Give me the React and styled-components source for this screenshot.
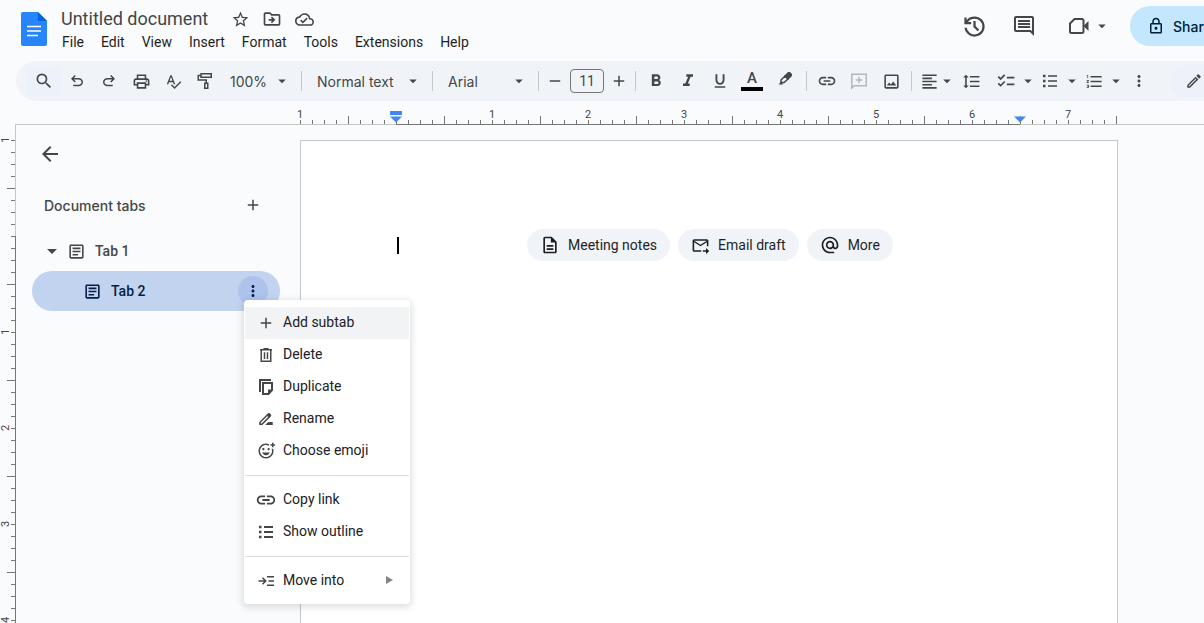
import React, { useState } from "react";
import styled, { createGlobalStyle } from "styled-components";
import {
  MdAdd,
  MdAlternateEmail,
  MdArrowBack,
  MdArrowDropDown,
  MdChecklist,
  MdDriveFileRenameOutline,
  MdFormatAlignLeft,
  MdFormatBold,
  MdFormatItalic,
  MdFormatLineSpacing,
  MdFormatListNumbered,
  MdFormatUnderlined,
  MdLink,
  MdMoreVert,
  MdOutlineAddReaction,
  MdOutlineArticle,
  MdOutlineCloudDone,
  MdOutlineComment,
  MdOutlineDescription,
  MdOutlineDriveFileMove,
  MdOutlineEdit,
  MdOutlineForwardToInbox,
  MdOutlineImage,
  MdOutlineLock,
  MdOutlinePrint,
  MdRemove,
  MdSearch,
  MdSpellcheck,
  MdStarBorder,
} from "react-icons/md";

const Symbol = ({ size, d }) => (
  <svg width={size} height={size} viewBox="0 -960 960 960" fill="currentColor">
    <path d={d} />
  </svg>
);

const UndoIcon = () => (
  <Symbol
    size={18}
    d="M280-200v-80h284q63 0 109.5-40T720-420q0-60-46.5-100T564-560H312l104 104-56 56-200-200 200-200 56 56-104 104h252q97 0 166.5 63T800-420q0 94-69.5 157T564-200H280Z"
  />
);

const RedoIcon = () => (
  <Symbol
    size={18}
    d="M396-200q-97 0-166.5-63T160-420q0-94 69.5-157T396-640h252L544-744l56-56 200 200-200 200-56-56 104-104H396q-63 0-109.5 40T240-420q0 60 46.5 100T396-280h284v80H396Z"
  />
);

const HistoryIcon = () => (
  <Symbol
    size={27}
    d="M480-120q-138 0-240.5-91.5T122-440h82q14 104 92.5 172T480-200q117 0 198.5-81.5T760-480q0-117-81.5-198.5T480-760q-69 0-129 32t-101 88h110v80H120v-240h80v94q51-64 124.5-99T480-840q75 0 140.5 28.5t114 77q48.5 48.5 77 114T840-480q0 75-28.5 140.5t-77 114q-48.5 48.5-114 77T480-120Zm112-192L440-464v-216h80v184l128 128-56 56Z"
  />
);

const DocsLogo = () => (
  <svg width="26" height="34" viewBox="0 0 26 34">
    <path d="M2 0h15l9 9v23a2 2 0 0 1-2 2H2a2 2 0 0 1-2-2V2a2 2 0 0 1 2-2z" fill="#2684fc" />
    <path d="M17 0l9 9h-9z" fill="#0066da" />
    <path d="M6 14.5h14M6 19h14M6 23.5h11" stroke="#fff" strokeWidth="1.7" />
  </svg>
);

const PaintIcon = () => (
  <svg width="18" height="18" viewBox="0 0 18 18" fill="none" stroke="currentColor" strokeWidth="1.5">
    <path d="M5 1.75h10.25v3.5H5zM5 3.5H2.25V8h8v3M8.75 11.25h3v5h-3z" />
  </svg>
);

const HighlightIcon = () => (
  <svg width="18" height="18" viewBox="0 0 18 18" fill="none" stroke="currentColor" strokeWidth="1.5">
    <path d="M9 6L5 10v2.500h3L12 9z" />
    <path d="M8 6l4-4h2l2 2v2l-4 4z" fill="currentColor" stroke="none" />
    <path d="M2.500 14.500l3-3 1.500 3z" fill="currentColor" stroke="none" />
  </svg>
);

const AddCommentIcon = () => (
  <svg width="18" height="18" viewBox="0 0 18 18" fill="none" stroke="currentColor" strokeWidth="1.5">
    <path d="M1.75 16V2.25h14.5v11.5H4z" />
    <path d="M9 4.75v6.5M5.75 8h6.5" />
  </svg>
);

const MeetIcon = () => (
  <svg width="22" height="18" viewBox="0 0 22 18">
    <path d="M6.500 2H14a1.500 1.500 0 0 1 1.500 1.500v11A1.500 1.500 0 0 1 14 16H3.500A1.500 1.500 0 0 1 2 14.500v-8z" fill="none" stroke="currentColor" strokeWidth="2" strokeLinejoin="round" />
    <path d="M15.500 9l5-5v10z" fill="currentColor" />
  </svg>
);

const ListIcon = ({ weight }) => (
  <svg width="18" height="18" viewBox="0 0 18 18" fill="none" stroke="currentColor" strokeWidth={weight}>
    <path d="M7 4h9M7 9h9M7 14h9" />
    <path d="M2 4h2.500M2 9h2.500M2 14h2.500" strokeWidth="2.5" />
  </svg>
);

const TrashIcon = () => (
  <svg width="18" height="18" viewBox="0 0 18 18" fill="none" stroke="currentColor" strokeWidth="1.5">
    <path d="M3 3.75h12M6.5 2.75h5M4.25 4v11.25h9.5V4M7.5 6.25V13M10.5 6.25V13" />
  </svg>
);

const DuplicateIcon = () => (
  <svg width="18" height="18" viewBox="0 0 18 18" fill="none" stroke="currentColor" strokeWidth="2">
    <path d="M3 14V2h11M6 5h9v7l-3.500 4H6z" />
    <path d="M15 11.500v1l-3 3h-1v-4z" fill="currentColor" stroke="none" />
  </svg>
);

const MoveIcon = () => (
  <svg width="18" height="18" viewBox="0 0 18 18" fill="none" stroke="currentColor" strokeWidth="1.5">
    <path d="M1.500 9h7M5.500 5.750L8.750 9 5.500 12.250M10 4.750h7M11.500 9H17M10 13.250h7" />
  </svg>
);

const menus = ["File", "Edit", "View", "Insert", "Format", "Tools", "Extensions", "Help"];

const tabActions = [
  [
    { label: "Add subtab", icon: <MdAdd size={18} />, active: true },
    { label: "Delete", icon: <TrashIcon /> },
    { label: "Duplicate", icon: <DuplicateIcon /> },
    { label: "Rename", icon: <MdDriveFileRenameOutline size={18} /> },
    { label: "Choose emoji", icon: <MdOutlineAddReaction size={18} /> },
  ],
  [
    { label: "Copy link", icon: <MdLink size={22} /> },
    { label: "Show outline", icon: <ListIcon weight={2} /> },
  ],
  [{ label: "Move into", icon: <MoveIcon />, submenu: true }],
];

// half inch steps, a number on every second one
const halves = (count, labels, from, to) =>
  Array.from({ length: count }, (_, i) => ({
    label: i % 2 === 0 ? labels[i / 2] : "",
    half: i % 2 === 1,
    active: i >= from && i < to,
  }));

const across = halves(17, ["1", "", "1", "2", "3", "4", "5", "6", "7"], 2, 15);
const down = halves(11, ["1", "", "1", "2", "3", "4"], 2, 11);

const App = () => {
  const [title, setTitle] = useState("Untitled document");
  const [fontSize, setFontSize] = useState("11");

  return (
    <Container>
      <GlobalStyle />
      <Header>
        <Logo href="#" aria-label="Docs home">
          <DocsLogo />
        </Logo>
        <Heading>
          <TitleRow>
            <TitleInput aria-label="Document title" value={title} onChange={(e) => setTitle(e.target.value)} />
            <TitleButton aria-label="Star"><MdStarBorder size={19} /></TitleButton>
            <TitleButton aria-label="Move"><MdOutlineDriveFileMove size={20} /></TitleButton>
            <TitleButton aria-label="Document status"><MdOutlineCloudDone size={19} /></TitleButton>
          </TitleRow>
          <MenuBar>
            {menus.map((m) => (
              <MenuButton key={m}>{m}</MenuButton>
            ))}
          </MenuBar>
        </Heading>
        <Actions>
          <ActionButton aria-label="Version history"><HistoryIcon /></ActionButton>
          <ActionButton aria-label="Comments"><MdOutlineComment size={24} /></ActionButton>
          <MeetButton aria-label="Join a call">
            <MeetIcon />
            <MdArrowDropDown size={18} />
          </MeetButton>
          <ShareButton>
            <MdOutlineLock size={18} />
            Share
          </ShareButton>
        </Actions>
      </Header>

      <Toolbar>
        <SearchButton aria-label="Search the menus"><MdSearch size={20} /></SearchButton>
        <ToolButton aria-label="Undo"><UndoIcon /></ToolButton>
        <ToolButton aria-label="Redo"><RedoIcon /></ToolButton>
        <ToolButton aria-label="Print"><MdOutlinePrint size={19} /></ToolButton>
        <ToolButton aria-label="Spelling"><MdSpellcheck size={17} /></ToolButton>
        <ToolButton aria-label="Paint format"><PaintIcon /></ToolButton>
        <Picker $width="76px" $inset="9px">
          <Select aria-label="Zoom"><option>100%</option></Select>
          <MdArrowDropDown size={18} />
        </Picker>
        <Separator />
        <Picker $width="122px" $inset="11px">
          <Select aria-label="Styles"><option>Normal text</option></Select>
          <MdArrowDropDown size={18} />
        </Picker>
        <Separator />
        <Picker $width="97px" $inset="11px">
          <Select aria-label="Font"><option>Arial</option></Select>
          <MdArrowDropDown size={18} />
        </Picker>
        <Separator />
        <ToolButton $width="24px" aria-label="Decrease font size"><MdRemove size={18} /></ToolButton>
        <SizeInput aria-label="Font size" value={fontSize} onChange={(e) => setFontSize(e.target.value)} />
        <ToolButton $width="24px" aria-label="Increase font size"><MdAdd size={18} /></ToolButton>
        <Separator />
        <ToolButton aria-label="Bold"><MdFormatBold size={20} /></ToolButton>
        <ToolButton aria-label="Italic"><MdFormatItalic size={20} /></ToolButton>
        <ToolButton aria-label="Underline"><MdFormatUnderlined size={18} /></ToolButton>
        <ToolButton aria-label="Text color"><ColorMark>A</ColorMark></ToolButton>
        <ToolButton $width="34px" aria-label="Highlight color"><Raised><HighlightIcon /></Raised></ToolButton>
        <Separator />
        <ToolButton aria-label="Insert link"><MdLink size={20} /></ToolButton>
        <ToolButton aria-label="Add comment" disabled><AddCommentIcon /></ToolButton>
        <ToolButton aria-label="Insert image"><MdOutlineImage size={19} /></ToolButton>
        <Separator />
        <ToolButton $width="26px" aria-label="Align"><MdFormatAlignLeft size={19} /></ToolButton>
        <DropButton $width="10px" aria-label="Align options"><MdArrowDropDown size={18} /></DropButton>
        <ToolButton $width="38px" aria-label="Line spacing"><MdFormatLineSpacing size={19} /></ToolButton>
        <ToolButton aria-label="Checklist"><MdChecklist size={20} /></ToolButton>
        <DropButton aria-label="Checklist options"><MdArrowDropDown size={18} /></DropButton>
        <ToolButton aria-label="Bulleted list"><ListIcon weight={1.5} /></ToolButton>
        <DropButton aria-label="Bulleted list options"><MdArrowDropDown size={18} /></DropButton>
        <ToolButton aria-label="Numbered list"><MdFormatListNumbered size={19} /></ToolButton>
        <DropButton aria-label="Numbered list options"><MdArrowDropDown size={18} /></DropButton>
        <ToolButton $width="34px" aria-label="More"><MdMoreVert size={18} /></ToolButton>
        <ModeButton aria-label="Editing mode">
          <MdOutlineEdit size={18} />
          <MdArrowDropDown size={18} />
        </ModeButton>
      </Toolbar>

      <Ruler>
        <RulerStart />
        <RulerTrack>
          {across.map((s, i) => (
            <HalfAcross key={i} $half={s.half} $active={s.active}>{s.label}</HalfAcross>
          ))}
          <LeftIndent viewBox="0 0 12 12">
            <path d="M0 0h12v4H0zM0 5.500h12l-6 6z" />
          </LeftIndent>
          <RightIndent viewBox="0 0 12 12">
            <path d="M0 5.500h12l-6 6z" />
          </RightIndent>
        </RulerTrack>
        <RulerEnd />
      </Ruler>

      <Main>
        <SideRuler>
          <SideRulerStart />
          {down.map((s, i) => (
            <HalfDown key={i} $half={s.half} $active={s.active}>
              {s.label && <SideLabel>{s.label}</SideLabel>}
            </HalfDown>
          ))}
        </SideRuler>

        <Sidebar>
          <BackButton aria-label="Close tabs"><MdArrowBack size={24} /></BackButton>
          <TabsHeader>
            <TabsTitle>Document tabs</TabsTitle>
            <RoundButton aria-label="Add tab"><MdAdd size={18} /></RoundButton>
          </TabsHeader>
          <TabRow>
            <MdArrowDropDown size={24} />
            <MdOutlineArticle size={19} />
            <TabName>Tab 1</TabName>
          </TabRow>
          <TabRow $selected>
            <MdOutlineArticle size={19} />
            <TabName>Tab 2</TabName>
            <RoundButton $pressed aria-label="Tab options"><MdMoreVert size={18} /></RoundButton>
            <Popup role="menu">
              {tabActions.map((group, i) => (
                <Group key={i}>
                  {group.map((a) => (
                    <PopupItem key={a.label} role="menuitem" $active={a.active}>
                      <PopupIcon>{a.icon}</PopupIcon>
                      {a.label}
                      {a.submenu && (
                        <SubmenuArrow viewBox="0 0 7 8">
                          <path d="M0 0l7 4-7 4z" />
                        </SubmenuArrow>
                      )}
                    </PopupItem>
                  ))}
                </Group>
              ))}
            </Popup>
          </TabRow>
        </Sidebar>

        <Page>
          <FirstLine>
            <Caret />
            <Chips>
              <Chip><MdOutlineDescription size={20} />Meeting notes</Chip>
              <Chip><MdOutlineForwardToInbox size={19} />Email draft</Chip>
              <Chip><MdAlternateEmail size={20} />More</Chip>
            </Chips>
          </FirstLine>
        </Page>
      </Main>
    </Container>
  );
};

export default App;

const GlobalStyle = createGlobalStyle`
  * {
    box-sizing: border-box;
  }
  body {
    margin: 0;
    background-color: #f9fbfd;
    color: #444746;
    font-family: Roboto, "Liberation Sans", sans-serif;
    font-size: 14px;
  }
  button, input, select {
    border: none;
    background: none;
    padding: 0;
    margin: 0;
    color: inherit;
    font: inherit;
  }
  button {
    cursor: pointer;
  }
  svg {
    display: block;
    flex: none;
  }
`;

const Container = styled.div`
  height: 100vh;
  overflow: hidden;
  display: flex;
  flex-direction: column;
`;

const Header = styled.header`
  flex: none;
  display: flex;
  height: 61px;
  padding-left: 21px;
`;
const Logo = styled.a`
  padding-top: 12px;
  margin-right: 14px;
`;
const Heading = styled.div`
  flex: 1;
  padding-top: 8px;
`;
const TitleRow = styled.div`
  display: flex;
  align-items: center;
  height: 22px;
`;
const TitleInput = styled.input`
  width: 163px;
  font-size: 18px;
  line-height: 22px;
`;
const TitleButton = styled.button`
  width: 32px;
  height: 22px;
  display: flex;
  align-items: center;
  justify-content: center;
`;
const MenuBar = styled.nav`
  display: flex;
  gap: 17px;
  padding: 3px 0 0 1px;
`;
const MenuButton = styled.button`
  color: #1f1f1f;
  line-height: 18px;
`;
const Actions = styled.div`
  flex: 0 0 254px;
  min-width: 0;
  display: flex;
  align-items: center;
  height: 40px;
  margin-top: 6px;
`;
const ActionButton = styled.button`
  flex: none;
  width: 49px;
  height: 40px;
  display: flex;
  align-items: center;
  justify-content: center;
`;
const MeetButton = styled(ActionButton)`
  width: 82px;
  gap: 3px;
`;
const ShareButton = styled.button`
  flex: none;
  display: flex;
  align-items: center;
  gap: 8px;
  height: 40px;
  padding: 0 24px 0 17px;
  border-radius: 20px;
  background-color: #c2e7ff;
  color: #001d35;
  font-family: Inter, Roboto, sans-serif;
  font-weight: 500;
`;

const Toolbar = styled.div`
  flex: none;
  display: flex;
  align-items: center;
  height: 40px;
  margin-left: 16px;
  padding-left: 10px;
  border-radius: 20px 0 0 20px;
  background-color: #f0f4f9;
  overflow: hidden;
`;
const ToolButton = styled.button`
  flex: none;
  width: ${(props) => props.$width || "32px"};
  height: 28px;
  display: flex;
  align-items: center;
  justify-content: center;
  &:disabled {
    color: #b4b7b9;
  }
`;
const SearchButton = styled(ToolButton)`
  width: 35px;
  background-color: #edf2fa;
`;
const DropButton = styled(ToolButton)`
  width: ${(props) => props.$width || "12px"};
`;
const Picker = styled.div`
  flex: none;
  display: flex;
  align-items: center;
  width: ${(props) => props.$width};
  height: 28px;
  padding: 0 6px 0 ${(props) => props.$inset};
  font-family: Inter, Roboto, sans-serif;
`;
const Select = styled.select`
  flex: 1;
  min-width: 0;
  appearance: none;
`;
const Separator = styled.div`
  flex: none;
  width: 1px;
  height: 20px;
  margin: 0 4px;
  background-color: #c7c7c7;
`;
const SizeInput = styled.input`
  flex: none;
  width: 34px;
  height: 24px;
  margin: 0 3px;
  border: 1px solid #747775;
  border-radius: 4px;
  text-align: center;
`;
const ColorMark = styled.span`
  width: 22px;
  height: 20px;
  border-bottom: 4px solid #000;
  font-size: 15px;
  font-weight: 500;
  line-height: 14px;
`;
const Raised = styled.span`
  padding-bottom: 4px;
`;
const ModeButton = styled.button`
  flex: none;
  display: flex;
  align-items: center;
  gap: 8px;
  height: 32px;
  margin-left: 14px;
  padding: 0 12px 0 15px;
  border-radius: 16px;
  background-color: #edf2fa;
`;

const RULE = "#747775";
const FAINT = "#c4c7c5";

const Ruler = styled.div`
  flex: none;
  display: flex;
  height: 24px;
  padding-left: 15px;
`;
const RulerStart = styled.div`
  flex: none;
  width: 285px;
  border-bottom: 1px solid ${FAINT};
`;
const RulerTrack = styled.div`
  position: relative;
  flex: none;
  display: flex;
`;
const HalfAcross = styled.div`
  width: 48px;
  border-bottom: 1px solid ${(props) => (props.$active ? RULE : FAINT)};
  background:
    repeating-linear-gradient(to right, ${RULE} 0 1px, transparent 1px 12px) left bottom / 48px 4px no-repeat,
    linear-gradient(${RULE}, ${RULE}) left bottom / 1px ${(props) => (props.$half ? "8px" : "4px")} no-repeat;
  font-size: 11px;
  line-height: 28px;
  text-indent: -3px;
`;
const RulerEnd = styled.div`
  flex: 1;
  border-bottom: 1px solid ${FAINT};
  background: linear-gradient(${RULE}, ${RULE}) left bottom / 1px 8px no-repeat;
`;
const LeftIndent = styled.svg`
  position: absolute;
  left: 90px;
  top: 10px;
  width: 12px;
  height: 12px;
  fill: #4285f4;
`;
const RightIndent = styled(LeftIndent)`
  left: 714px;
`;

const Main = styled.main`
  flex: 1;
  min-height: 0;
  display: flex;
`;
const SideRuler = styled.div`
  flex: none;
  width: 16px;
`;
const SideRulerStart = styled.div`
  height: 15px;
  border-right: 1px solid ${FAINT};
`;
const HalfDown = styled.div`
  display: flex;
  align-items: flex-start;
  height: 48px;
  border-right: 1px solid ${(props) => (props.$active ? RULE : FAINT)};
  background:
    repeating-linear-gradient(to bottom, ${RULE} 0 1px, transparent 1px 12px) right top / 4px 48px no-repeat,
    linear-gradient(${RULE}, ${RULE}) right top / ${(props) => (props.$half ? "8px" : "4px")} 1px no-repeat;
`;
const SideLabel = styled.div`
  width: 11px;
  height: 12px;
  margin-top: -6px;
  font-size: 11px;
  line-height: 12px;
  text-align: center;
  transform: rotate(-90deg);
`;

const Sidebar = styled.aside`
  flex: none;
  width: 284px;
  padding: 13px 20px 0 16px;
`;
const BackButton = styled.button`
  display: flex;
  align-items: center;
  justify-content: center;
  width: 36px;
  height: 32px;
`;
const TabsHeader = styled.div`
  display: flex;
  align-items: center;
  justify-content: space-between;
  height: 32px;
  margin: 19px 0 10px;
  padding: 0 12px;
`;
const TabsTitle = styled.h2`
  margin: 0;
  font-family: Inter, Roboto, sans-serif;
  font-size: 14px;
  font-weight: 500;
`;
const RoundButton = styled.button`
  display: flex;
  align-items: center;
  justify-content: center;
  width: 30px;
  height: 30px;
  border-radius: 50%;
  background-color: ${(props) => (props.$pressed ? "#adc3ec" : "transparent")};
`;
const TabRow = styled.div`
  position: relative;
  display: flex;
  align-items: center;
  height: 40px;
  padding: ${(props) => (props.$selected ? "0 12px 0 51px" : "0 12px 0 8px")};
  gap: ${(props) => (props.$selected ? "9px" : "3px")};
  border-radius: 20px;
  background-color: ${(props) => (props.$selected ? "#c2d3f0" : "transparent")};
  color: ${(props) => (props.$selected ? "#041e49" : "#444746")};
`;
const TabName = styled.span`
  flex: 1;
  padding-left: 6px;
  font-weight: 500;
  ${TabRow} + ${TabRow} & {
    padding-left: 0;
  }
`;

const Popup = styled.div`
  position: absolute;
  z-index: 1;
  left: 212px;
  top: 29px;
  width: 166px;
  padding: 7px 1px;
  border-radius: 4px;
  background-color: #fff;
  box-shadow: 0 2px 6px 2px rgba(60, 64, 67, 0.15);
`;
const Group = styled.div`
  & + & {
    margin-top: 8px;
    padding-top: 8px;
    border-top: 1px solid #dadce0;
  }
`;
const PopupItem = styled.button`
  display: flex;
  align-items: center;
  width: 100%;
  height: 32px;
  padding: 0 16px 2px 10px;
  background-color: ${(props) => (props.$active ? "#f1f3f4" : "transparent")};
  color: #202124;
`;
const PopupIcon = styled.span`
  display: flex;
  justify-content: center;
  width: 22px;
  margin-right: 6px;
  padding-top: 2px;
  color: #444746;
`;
const SubmenuArrow = styled.svg`
  width: 7px;
  height: 8px;
  margin-left: auto;
  fill: #80868b;
`;

const Page = styled.div`
  flex: none;
  width: 818px;
  margin-top: 15px;
  padding: 88px 95px;
  border: 1px solid #c4c7c5;
  border-bottom: none;
  background-color: #fff;
`;
const FirstLine = styled.div`
  display: flex;
  align-items: center;
  gap: 128px;
`;
const Caret = styled.div`
  width: 2px;
  height: 17px;
  margin-left: 1px;
  background-color: #000;
`;
const Chips = styled.div`
  display: flex;
  gap: 8px;
`;
const Chip = styled.button`
  display: flex;
  align-items: center;
  gap: 8px;
  height: 32px;
  padding: 0 13px;
  border-radius: 16px;
  background-color: #f0f4f9;
  color: #1f1f1f;
`;
